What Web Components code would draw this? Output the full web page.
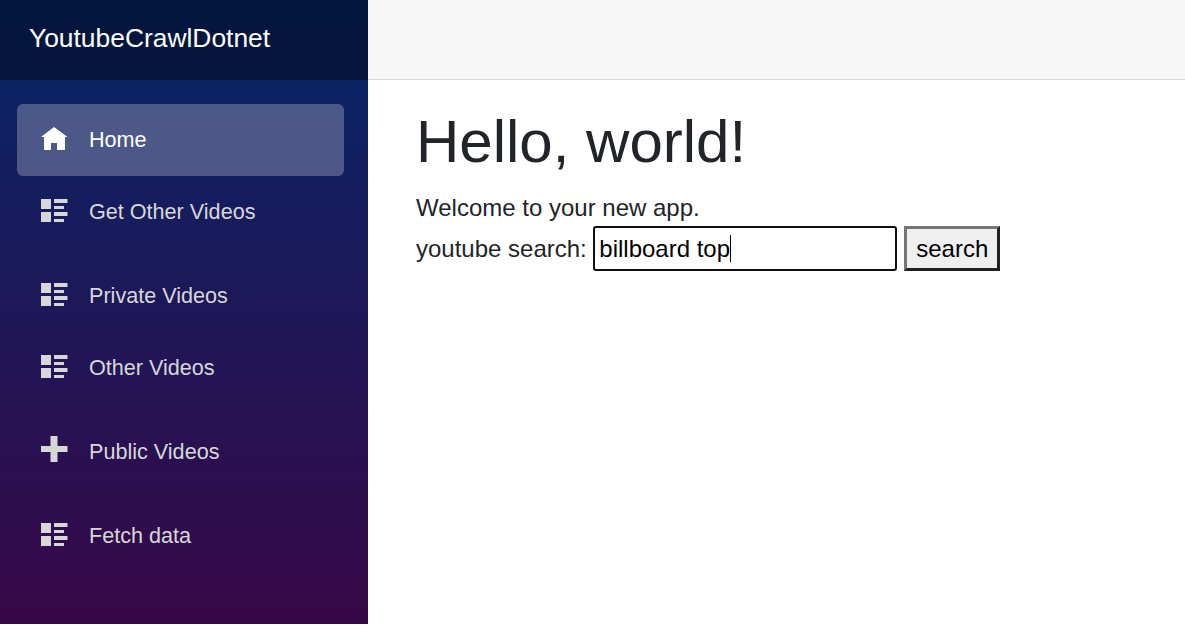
<!DOCTYPE html>
<html lang="en">
<head>
<meta charset="utf-8">
<title>YoutubeCrawlDotnet</title>
<style>
html, body { margin: 0; background: #fff; }
body { font: 24px/36px "Liberation Sans", Arial, sans-serif; color: #212529; height: 641px; overflow: hidden; }
</style>
</head>
<body>
<app-layout>
  <app-sidebar slot="sidebar" brand="YoutubeCrawlDotnet">
    <nav-item icon="home" active>Home</nav-item>
    <nav-item icon="list" spaced>Get Other Videos</nav-item>
    <nav-item icon="list">Private Videos</nav-item>
    <nav-item icon="list" spaced>Other Videos</nav-item>
    <nav-item icon="plus" spaced>Public Videos</nav-item>
    <nav-item icon="list">Fetch data</nav-item>
  </app-sidebar>
  <home-page></home-page>
</app-layout>
<script>
class BaseElement extends HTMLElement {
  connectedCallback() {
    if (!this.shadowRoot) this.attachShadow({ mode: "open" }).innerHTML = this.render();
  }
}

customElements.define("app-layout", class extends BaseElement {
  render() {
    return `<style>
      :host { display: flex; align-items: flex-start; }
      main { flex: 1; min-width: 0; }
      .top { height: 79px; background: #f7f7f7; border-bottom: 1px solid #d6d5d5; }
      .content { padding: 26px 48px 0; }
    </style>
    <slot name="sidebar"></slot>
    <main><div class="top"></div><div class="content"><slot></slot></div></main>`;
  }
});

customElements.define("app-sidebar", class extends BaseElement {
  render() {
    return `<style>
      :host { display: block; flex: none; width: 368px; height: 624px;
        background: linear-gradient(180deg, rgb(5,39,103) 0, #3a0647 655px); }
      header { box-sizing: border-box; height: 80px; padding: 20px 29px 0; background: rgba(0,0,0,.4);
        color: #fff; font-size: 26.4px; line-height: 36px; }
      nav { padding: 24px 24px 0 17px; }
    </style>
    <header>${this.getAttribute("brand")}</header>
    <nav><slot></slot></nav>`;
  }
});

const ICONS = {
  home: "M13 3L0 13h3v13h7v-7h6v7h8V13h2.5z",
  list: "M0 3h10v10H0zM13 3h13.5v4H13zM13 10h10v3H13zM0 16h10v10H0zM13 16h13.5v4H13zM13 23h10v3H13z",
  plus: "M9.5 0v10H0v6h9.5v10h7V16h10v-6h-10V0z"
};

customElements.define("nav-item", class extends BaseElement {
  render() {
    return `<style>
      :host { display: block; font-size: 21.6px; color: #d7d7d7; }
      :host([spaced]) { padding-bottom: 12px; }
      a { display: flex; height: 72px; line-height: 71px; padding-left: 24px; border-radius: 6px; }
      :host([active]) a { background: rgba(255,255,255,.25); color: #fff; }
      svg { flex: none; width: 27px; height: 27px; margin: 20px 21px 0 0; fill: currentColor; }
    </style>
    <a><svg viewBox="0 0 27 27"><path d="${ICONS[this.getAttribute("icon")]}"/></svg><span><slot></slot></span></a>`;
  }
});

customElements.define("home-page", class extends BaseElement {
  render() {
    return `<style>
      :host { display: block; }
      h1 { margin: 0 0 12px; font-size: 60px; line-height: 72px; font-weight: 400; }
      p { margin: 0; }
    </style>
    <h1>Hello, world!</h1>
    <p>Welcome to your new app.</p>
    <search-form value="billboard top"></search-form>`;
  }
});

customElements.define("search-form", class extends BaseElement {
  render() {
    return `<style>
      :host { display: flex; line-height: 45px; }
      .field { display: flex; align-items: center; box-sizing: border-box; width: 304px; height: 45px;
        margin: 0 7px 0 6.5px; padding-left: 4px; border: 2px solid #101010; border-radius: 3px;
        background: #fff; color: #000; line-height: 41px; }
      .caret { width: 1px; height: 27px; background: #000; }
      button { box-sizing: border-box; width: 96px; height: 45px; padding: 0; font: inherit; line-height: 39px;
        color: #000; background: #efefef; border: 3px solid; border-color: #767676 #212121 #212121 #767676; border-radius: 0; }
    </style>
    <span>youtube search:</span>
    <div class="field" role="textbox"><span>${this.getAttribute("value")}</span><i class="caret"></i></div>
    <button type="button">search</button>`;
  }
});
</script>
</body>
</html>
